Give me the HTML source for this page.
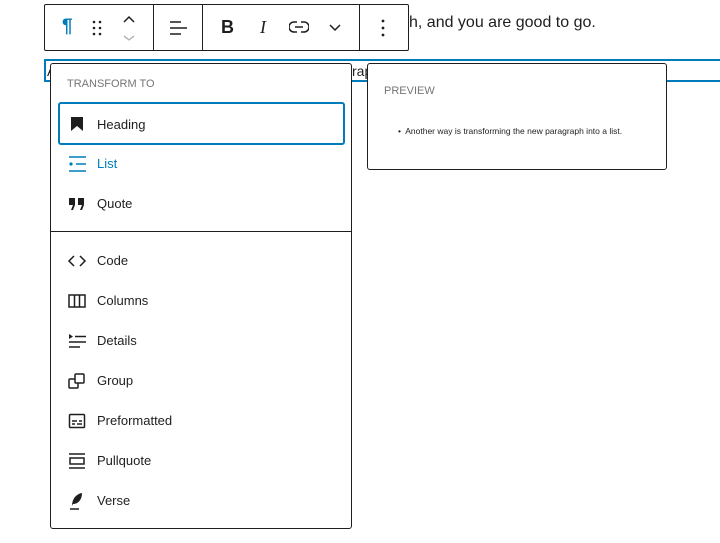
<!DOCTYPE html>
<html><head><meta charset="utf-8"><style>
*{box-sizing:border-box;margin:0;padding:0}
body{width:720px;height:543px;background:#fff;position:relative;overflow:hidden;font-family:"Liberation Sans",sans-serif;color:#1e1e1e}
.abs{position:absolute}
.tb{left:44px;top:4px;width:365px;height:47px;border:1px solid #1e1e1e;border-radius:2px;background:#fff}
.div{position:absolute;top:0;bottom:0;width:1px;background:#1e1e1e}
.menu{left:50px;top:63px;width:302px;height:466px;border:1px solid #1e1e1e;border-radius:3px;background:#fff}
.item{position:absolute;left:7px;width:287px;height:43px;font-size:13px;line-height:44px;padding-left:39px}
.item svg{position:absolute;left:9px;top:12px}
.prev{left:367px;top:63px;width:300px;height:107px;border:1px solid #1e1e1e;border-radius:3px;background:#fff}
</style></head><body>
<div class="abs" style="left:409px;top:14px;font-size:16px;">h, and you are good to go.</div>
<div class="abs" style="left:44px;top:59px;width:700px;height:23px;border:2px solid #007cba;"></div>
<div class="abs" style="left:47px;top:63px;font-size:14px;">A</div>
<div class="abs" style="left:352px;top:63px;font-size:14px;">rap</div>

<div class="abs tb">
 <div class="div" style="left:108px"></div>
 <div class="div" style="left:157px"></div>
 <div class="div" style="left:314px"></div>
 <div class="abs" style="left:17px;top:11px;font-size:19px;font-weight:bold;color:#007cba">¶</div>
 <svg class="abs" style="left:46px;top:14px" width="12" height="18"><g fill="#1e1e1e"><circle cx="3" cy="3" r="1.3"/><circle cx="9" cy="3" r="1.3"/><circle cx="3" cy="9" r="1.3"/><circle cx="9" cy="9" r="1.3"/><circle cx="3" cy="15" r="1.3"/><circle cx="9" cy="15" r="1.3"/></g></svg>
 <svg class="abs" style="left:77px;top:9px" width="14" height="28"><path d="M2 8 L7 3 L12 8" fill="none" stroke="#1e1e1e" stroke-width="1.5"/><path d="M2 22 L7 26 L12 22" fill="none" stroke="#aaa" stroke-width="1.2"/></svg>
 <svg class="abs" style="left:124px;top:14px" width="18" height="18"><path d="M1 3h11M1 9h17M1 15h11" stroke="#1e1e1e" stroke-width="1.5"/></svg>
 <div class="abs" style="left:176px;top:12px;font-size:18px;font-weight:bold">B</div>
 <div class="abs" style="left:215px;top:12px;font-size:18px;font-style:italic;font-family:'Liberation Serif',serif">I</div>
 <svg class="abs" style="left:244px;top:15px" width="20" height="14"><path d="M8 2H5a5 5 0 0 0 0 10h3M12 2h3a5 5 0 0 1 0 10h-3M6 7h8" fill="none" stroke="#1e1e1e" stroke-width="1.5"/></svg>
 <svg class="abs" style="left:284px;top:19px" width="12" height="8"><path d="M1 1l5 5 5-5" fill="none" stroke="#1e1e1e" stroke-width="1.5"/></svg>
 <svg class="abs" style="left:336px;top:13px" width="4" height="20"><g fill="#1e1e1e"><circle cx="2" cy="3" r="1.4"/><circle cx="2" cy="10" r="1.4"/><circle cx="2" cy="17" r="1.4"/></g></svg>
</div>

<div class="abs menu">
 <div class="abs" style="left:16px;top:14px;font-size:11px;color:#757575">TRANSFORM TO</div>
 <div class="item" style="top:38px;border:2px solid #007cba;border-radius:3px;line-height:41px;padding-left:37px"><svg style="left:10px;top:12px" width="14" height="16"><path d="M1 1h12v14l-6-5-6 5z" fill="#1e1e1e"/></svg>Heading</div>
 <div class="item" style="top:78px;color:#007cba"><svg width="20" height="20"><path d="M2 3h17M9 10h10M2 17h17" stroke="#007cba" stroke-width="1.5"/><circle cx="4" cy="10" r="1.6" fill="#007cba"/></svg>List</div>
 <div class="item" style="top:118px"><svg width="20" height="20"><path d="M2 4h6v7l-2 5h-2l2-5h-4zM11 4h6v7l-2 5h-2l2-5h-4z" fill="#1e1e1e"/></svg>Quote</div>
 <div class="abs" style="left:0;right:0;top:167px;height:1px;background:#1e1e1e"></div>
 <div class="item" style="top:175px"><svg width="20" height="20"><path d="M7 5l-5 5 5 5M13 5l5 5-5 5" fill="none" stroke="#1e1e1e" stroke-width="1.5"/></svg>Code</div>
 <div class="item" style="top:215px"><svg width="20" height="20"><rect x="2" y="4" width="16" height="12" fill="none" stroke="#1e1e1e" stroke-width="1.5"/><path d="M7.5 4v12M12.5 4v12" stroke="#1e1e1e" stroke-width="1.5"/></svg>Columns</div>
 <div class="item" style="top:255px"><svg width="20" height="20"><path d="M2 3l4 2.5-4 2.5z" fill="#1e1e1e"/><path d="M8 5.5h11M2 11h17M2 16h11" stroke="#1e1e1e" stroke-width="1.5"/></svg>Details</div>
 <div class="item" style="top:295px"><svg width="20" height="20"><rect x="2" y="8" width="9" height="9" rx="1" fill="none" stroke="#1e1e1e" stroke-width="1.5"/><rect x="8" y="3" width="9" height="9" rx="1" fill="#fff" stroke="#1e1e1e" stroke-width="1.5"/></svg>Group</div>
 <div class="item" style="top:335px"><svg width="20" height="20"><rect x="2.5" y="3.5" width="15" height="13" rx="1" fill="none" stroke="#1e1e1e" stroke-width="1.5"/><path d="M5 10h5M12 10h3M5 13h3M10 13h5" stroke="#1e1e1e" stroke-width="1.4"/></svg>Preformatted</div>
 <div class="item" style="top:375px"><svg width="20" height="20"><path d="M2 3h16M2 17h16" stroke="#1e1e1e" stroke-width="1.5"/><rect x="3" y="7" width="14" height="6" fill="none" stroke="#1e1e1e" stroke-width="1.5"/></svg>Pullquote</div>
 <div class="item" style="top:415px"><svg width="20" height="20"><path d="M5 15 C5 8 9 3 15 2 C15 9 11 13 6 13 Z" fill="#1e1e1e"/><path d="M3 18h9" stroke="#1e1e1e" stroke-width="1.5"/></svg>Verse</div>
</div>

<div class="abs prev">
 <div class="abs" style="left:16px;top:21px;font-size:11px;color:#757575">PREVIEW</div>
 <div class="abs" style="left:30px;top:62px;font-size:8.5px;color:#1e1e1e">•&nbsp; Another way is transforming the new paragraph into a list.</div>
</div>
</body></html>
